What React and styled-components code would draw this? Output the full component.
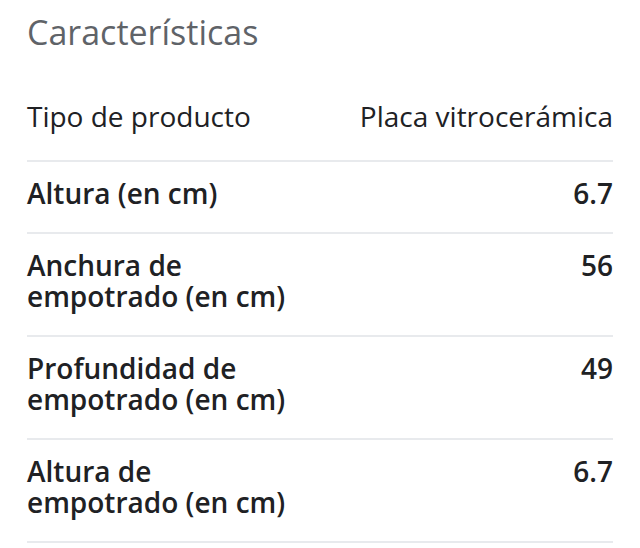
import styled, { createGlobalStyle } from 'styled-components';

const GlobalStyle = createGlobalStyle`
  html, body {
    margin: 0;
    padding: 0;
    background: #ffffff;
  }
  body {
    font-family: "Open Sans", "Noto Sans", sans-serif;
    -webkit-font-smoothing: antialiased;
  }
`;

const Section = styled.section`
  padding: 12px 27px 0 27px;
  width: 640px;
  box-sizing: border-box;
`;

const Title = styled.h2`
  margin: 0;
  color: #5f6368;
  font-size: 34px;
  font-weight: 400;
  line-height: 40px;
  height: 73px;
`;

const List = styled.dl`
  margin: 0;
`;

const Row = styled.div`
  display: flex;
  justify-content: space-between;
  align-items: flex-start;
  gap: 24px;
  padding: 16px 0 ${({ $first }) => ($first ? '28px' : '23px')};
  border-bottom: 2px solid #e8eaed;
  font-size: 28px;
  line-height: 31px;
  color: #202124;
`;

const Label = styled.dt`
  margin: 0;
  font-weight: ${({ $bold }) => ($bold ? 600 : 400)};
  max-width: ${({ $bold }) => ($bold ? '270px' : 'none')};
`;

const Value = styled.dd`
  margin: 0;
  text-align: right;
  white-space: nowrap;
  font-weight: ${({ $bold }) => ($bold ? 600 : 400)};
`;

const specs = [
  { label: 'Tipo de producto', value: 'Placa vitrocerámica', bold: false },
  { label: 'Altura (en cm)', value: '6.7', bold: true },
  { label: 'Anchura de empotrado (en cm)', value: '56', bold: true },
  { label: 'Profundidad de empotrado (en cm)', value: '49', bold: true },
  { label: 'Altura de empotrado (en cm)', value: '6.7', bold: true },
];

const App = () => {
  return (
    <>
      <GlobalStyle />
      <Section>
        <Title>Características</Title>
        <List>
          {specs.map((s, i) => (
            <Row key={s.label} $first={i === 0}>
              <Label $bold={s.bold}>{s.label}</Label>
              <Value $bold={s.bold}>{s.value}</Value>
            </Row>
          ))}
        </List>
      </Section>
    </>
  );
};

export default App;
